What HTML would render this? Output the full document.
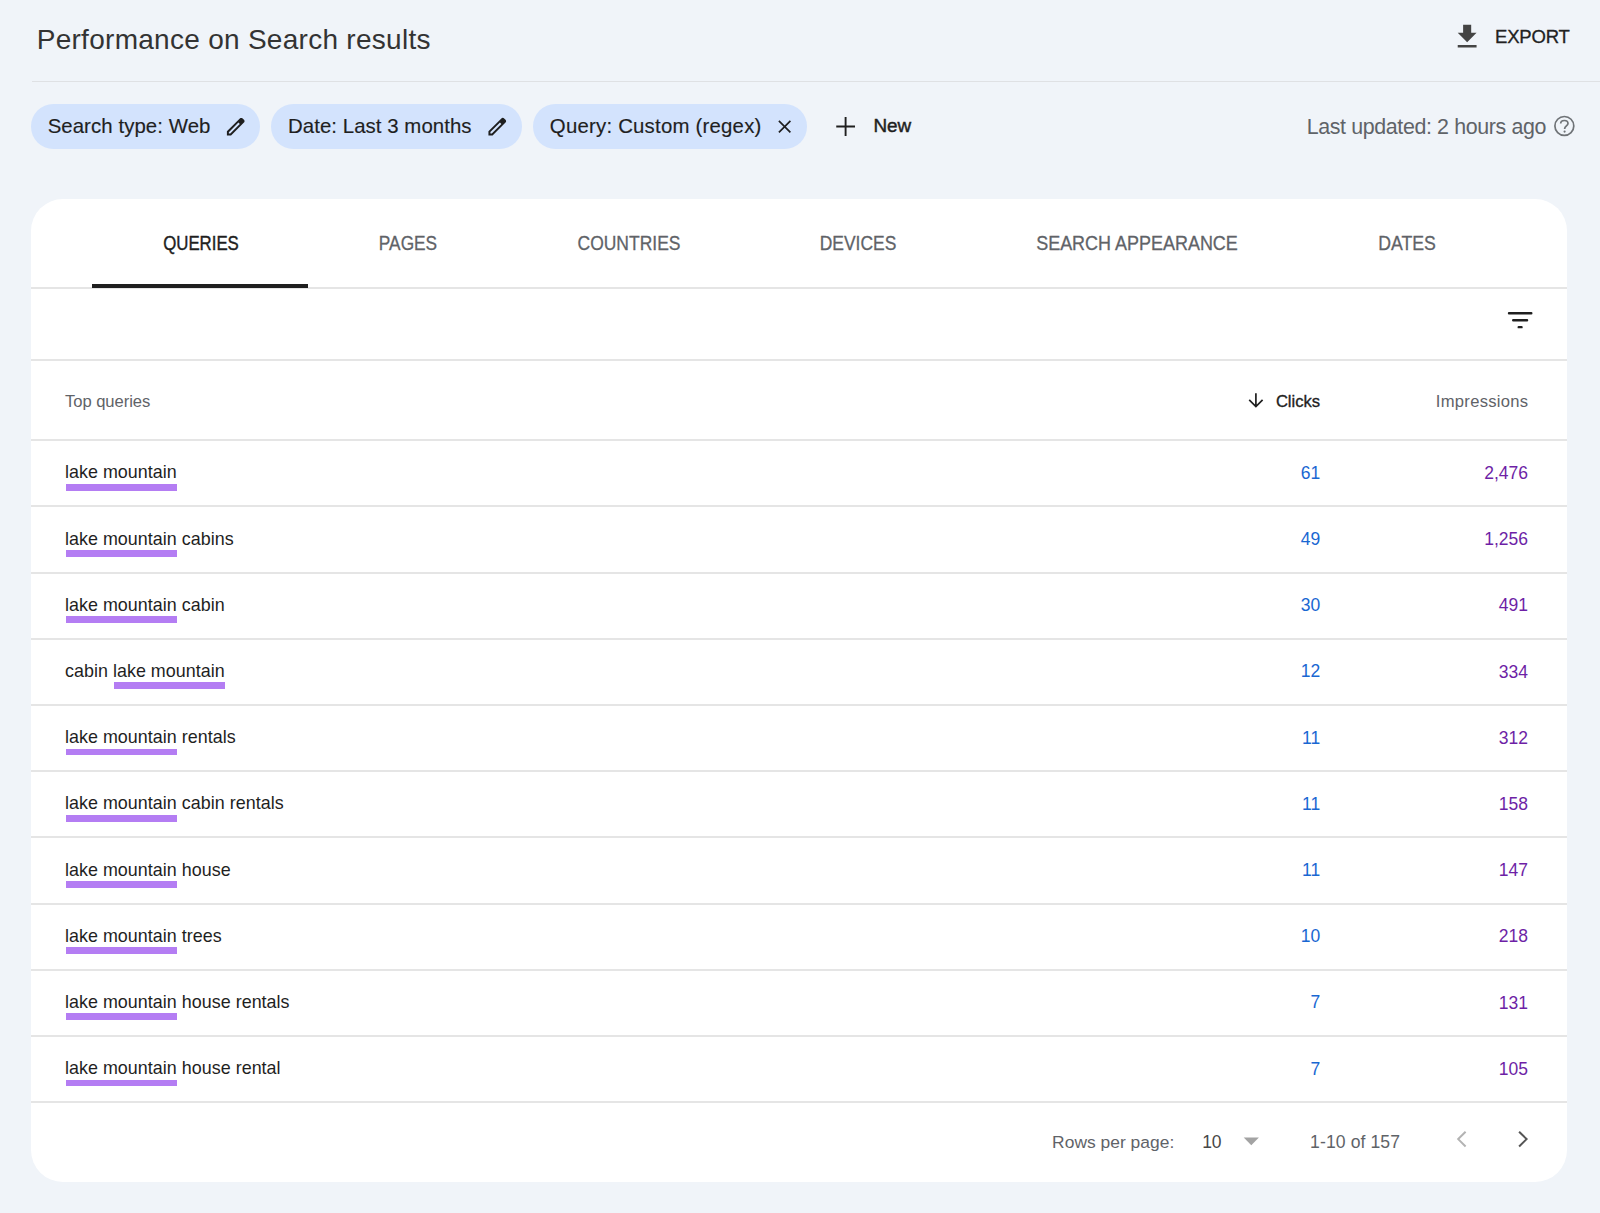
<!DOCTYPE html>
<html><head><meta charset="utf-8"><style>
html,body{margin:0;padding:0;}
body{width:1600px;height:1213px;background:#f0f4f9;position:relative;overflow:hidden;font-family:"Liberation Sans",sans-serif;}
.t{position:absolute;white-space:nowrap;}
.r{position:absolute;}
</style></head><body>
<div class="t" style="top:23.60px;font-size:28.0px;line-height:32.2px;color:#333333;letter-spacing:0.28px;left:36.71px;">Performance on Search results</div>
<div class="t" style="top:25.75px;font-size:18.5px;line-height:21.275px;color:#222222;letter-spacing:-0.184px;-webkit-text-stroke:0.3px #222222;left:1495.00px;">EXPORT</div>
<div class="r" style="left:32px;top:80.9px;width:1568px;height:1.6px;background:#dfe1e4;"></div>
<div class="r" style="left:31px;top:104.3px;width:229.2px;height:44.45px;background:#d3e3fd;border-radius:22.2px;"></div>
<div class="r" style="left:271.4px;top:104.3px;width:250.8px;height:44.45px;background:#d3e3fd;border-radius:22.2px;"></div>
<div class="r" style="left:533px;top:104.3px;width:273.9px;height:44.45px;background:#d3e3fd;border-radius:22.2px;"></div>
<div class="t" style="top:115.00px;font-size:20.4px;line-height:23.46px;color:#1f1f1f;letter-spacing:0.072px;-webkit-text-stroke:0.15px #1f1f1f;left:47.64px;">Search type: Web</div>
<div class="t" style="top:115.00px;font-size:20.4px;line-height:23.46px;color:#1f1f1f;letter-spacing:0.05px;-webkit-text-stroke:0.15px #1f1f1f;left:288.10px;">Date: Last 3 months</div>
<div class="t" style="top:115.00px;font-size:20.4px;line-height:23.46px;color:#1f1f1f;letter-spacing:0.209px;-webkit-text-stroke:0.15px #1f1f1f;left:549.82px;">Query: Custom (regex)</div>
<div class="t" style="top:115.08px;font-size:18.9px;line-height:21.735px;color:#1f1f1f;letter-spacing:-0.09px;-webkit-text-stroke:0.45px #1f1f1f;left:873.46px;">New</div>
<div class="t" style="top:114.98px;font-size:21.4px;line-height:24.61px;color:#5f6368;letter-spacing:-0.364px;left:1306.64px;">Last updated: 2 hours ago</div>
<div class="r" style="left:30.75px;top:198.7px;width:1536.5px;height:983.3px;background:#fff;border-radius:32px;"></div>
<div class="t" style="top:232.03px;font-size:19.5px;line-height:22.425px;color:#1f1f1f;-webkit-text-stroke:0.4px #1f1f1f;left:-99.22px;width:600px;text-align:center;transform:scaleX(0.8622);transform-origin:50% 50%;">QUERIES</div>
<div class="t" style="top:232.03px;font-size:19.5px;line-height:22.425px;color:#5f6368;-webkit-text-stroke:0.28px #5f6368;left:108.27px;width:600px;text-align:center;transform:scaleX(0.8860);transform-origin:50% 50%;">PAGES</div>
<div class="t" style="top:232.03px;font-size:19.5px;line-height:22.425px;color:#5f6368;-webkit-text-stroke:0.28px #5f6368;left:329.00px;width:600px;text-align:center;transform:scaleX(0.8964);transform-origin:50% 50%;">COUNTRIES</div>
<div class="t" style="top:232.03px;font-size:19.5px;line-height:22.425px;color:#5f6368;-webkit-text-stroke:0.28px #5f6368;left:558.00px;width:600px;text-align:center;transform:scaleX(0.8941);transform-origin:50% 50%;">DEVICES</div>
<div class="t" style="top:232.03px;font-size:19.5px;line-height:22.425px;color:#5f6368;-webkit-text-stroke:0.28px #5f6368;left:837.45px;width:600px;text-align:center;transform:scaleX(0.9211);transform-origin:50% 50%;">SEARCH APPEARANCE</div>
<div class="t" style="top:232.03px;font-size:19.5px;line-height:22.425px;color:#5f6368;-webkit-text-stroke:0.28px #5f6368;left:1107.45px;width:600px;text-align:center;transform:scaleX(0.9067);transform-origin:50% 50%;">DATES</div>
<div class="r" style="left:31px;top:287.05px;width:1536px;height:2px;background:#e5e5e5;"></div>
<div class="r" style="left:92px;top:284px;width:216.2px;height:3.9px;background:#1f1f1f;"></div>
<div class="r" style="left:31px;top:359.05px;width:1536px;height:2px;background:#e5e5e5;"></div>
<div class="t" style="top:391.50px;font-size:16.6px;line-height:19.09px;color:#5f6368;letter-spacing:-0.054px;left:65.00px;">Top queries</div>
<div class="t" style="top:391.70px;font-size:16.6px;line-height:19.09px;color:#1f1f1f;letter-spacing:-0.036px;-webkit-text-stroke:0.35px #1f1f1f;right:280.04px;">Clicks</div>
<div class="t" style="top:391.70px;font-size:16.6px;line-height:19.09px;color:#5f6368;letter-spacing:0.27px;right:71.73px;">Impressions</div>
<div class="r" style="left:31px;top:439.1px;width:1536px;height:2px;background:#e5e5e5;"></div>
<div class="t" style="top:462.41px;font-size:17.9px;line-height:20.585px;color:#1f1f1f;letter-spacing:0.03px;left:65.00px;">lake mountain</div>
<div class="r" style="left:65.9px;top:483.70px;width:111px;height:6.9px;background:#b47df3;"></div>
<div class="t" style="top:462.77px;font-size:17.5px;line-height:20.125px;color:#1967d2;right:279.75px;">61</div>
<div class="t" style="top:462.97px;font-size:17.5px;line-height:20.125px;color:#6e1fa6;right:72.00px;">2,476</div>
<div class="r" style="left:31px;top:505.31px;width:1536px;height:2px;background:#e5e5e5;"></div>
<div class="t" style="top:528.62px;font-size:17.9px;line-height:20.585px;color:#1f1f1f;letter-spacing:0.03px;left:65.00px;">lake mountain cabins</div>
<div class="r" style="left:65.9px;top:549.91px;width:111px;height:6.9px;background:#b47df3;"></div>
<div class="t" style="top:528.98px;font-size:17.5px;line-height:20.125px;color:#1967d2;right:279.75px;">49</div>
<div class="t" style="top:529.18px;font-size:17.5px;line-height:20.125px;color:#6e1fa6;right:72.00px;">1,256</div>
<div class="r" style="left:31px;top:571.52px;width:1536px;height:2px;background:#e5e5e5;"></div>
<div class="t" style="top:594.83px;font-size:17.9px;line-height:20.585px;color:#1f1f1f;letter-spacing:0.03px;left:65.00px;">lake mountain cabin</div>
<div class="r" style="left:65.9px;top:616.12px;width:111px;height:6.9px;background:#b47df3;"></div>
<div class="t" style="top:595.19px;font-size:17.5px;line-height:20.125px;color:#1967d2;right:279.75px;">30</div>
<div class="t" style="top:595.39px;font-size:17.5px;line-height:20.125px;color:#6e1fa6;right:72.00px;">491</div>
<div class="r" style="left:31px;top:637.73px;width:1536px;height:2px;background:#e5e5e5;"></div>
<div class="t" style="top:661.04px;font-size:17.9px;line-height:20.585px;color:#1f1f1f;letter-spacing:0.03px;left:65.00px;">cabin lake mountain</div>
<div class="r" style="left:113.75px;top:682.33px;width:111px;height:6.9px;background:#b47df3;"></div>
<div class="t" style="top:661.40px;font-size:17.5px;line-height:20.125px;color:#1967d2;right:279.75px;">12</div>
<div class="t" style="top:661.60px;font-size:17.5px;line-height:20.125px;color:#6e1fa6;right:72.00px;">334</div>
<div class="r" style="left:31px;top:703.94px;width:1536px;height:2px;background:#e5e5e5;"></div>
<div class="t" style="top:727.25px;font-size:17.9px;line-height:20.585px;color:#1f1f1f;letter-spacing:0.03px;left:65.00px;">lake mountain rentals</div>
<div class="r" style="left:65.9px;top:748.54px;width:111px;height:6.9px;background:#b47df3;"></div>
<div class="t" style="top:727.61px;font-size:17.5px;line-height:20.125px;color:#1967d2;right:279.75px;">11</div>
<div class="t" style="top:727.81px;font-size:17.5px;line-height:20.125px;color:#6e1fa6;right:72.00px;">312</div>
<div class="r" style="left:31px;top:770.15px;width:1536px;height:2px;background:#e5e5e5;"></div>
<div class="t" style="top:793.46px;font-size:17.9px;line-height:20.585px;color:#1f1f1f;letter-spacing:0.03px;left:65.00px;">lake mountain cabin rentals</div>
<div class="r" style="left:65.9px;top:814.75px;width:111px;height:6.9px;background:#b47df3;"></div>
<div class="t" style="top:793.82px;font-size:17.5px;line-height:20.125px;color:#1967d2;right:279.75px;">11</div>
<div class="t" style="top:794.02px;font-size:17.5px;line-height:20.125px;color:#6e1fa6;right:72.00px;">158</div>
<div class="r" style="left:31px;top:836.36px;width:1536px;height:2px;background:#e5e5e5;"></div>
<div class="t" style="top:859.67px;font-size:17.9px;line-height:20.585px;color:#1f1f1f;letter-spacing:0.03px;left:65.00px;">lake mountain house</div>
<div class="r" style="left:65.9px;top:880.96px;width:111px;height:6.9px;background:#b47df3;"></div>
<div class="t" style="top:860.03px;font-size:17.5px;line-height:20.125px;color:#1967d2;right:279.75px;">11</div>
<div class="t" style="top:860.23px;font-size:17.5px;line-height:20.125px;color:#6e1fa6;right:72.00px;">147</div>
<div class="r" style="left:31px;top:902.57px;width:1536px;height:2px;background:#e5e5e5;"></div>
<div class="t" style="top:925.88px;font-size:17.9px;line-height:20.585px;color:#1f1f1f;letter-spacing:0.03px;left:65.00px;">lake mountain trees</div>
<div class="r" style="left:65.9px;top:947.17px;width:111px;height:6.9px;background:#b47df3;"></div>
<div class="t" style="top:926.24px;font-size:17.5px;line-height:20.125px;color:#1967d2;right:279.75px;">10</div>
<div class="t" style="top:926.44px;font-size:17.5px;line-height:20.125px;color:#6e1fa6;right:72.00px;">218</div>
<div class="r" style="left:31px;top:968.78px;width:1536px;height:2px;background:#e5e5e5;"></div>
<div class="t" style="top:992.09px;font-size:17.9px;line-height:20.585px;color:#1f1f1f;letter-spacing:0.03px;left:65.00px;">lake mountain house rentals</div>
<div class="r" style="left:65.9px;top:1013.38px;width:111px;height:6.9px;background:#b47df3;"></div>
<div class="t" style="top:992.45px;font-size:17.5px;line-height:20.125px;color:#1967d2;right:279.75px;">7</div>
<div class="t" style="top:992.65px;font-size:17.5px;line-height:20.125px;color:#6e1fa6;right:72.00px;">131</div>
<div class="r" style="left:31px;top:1034.99px;width:1536px;height:2px;background:#e5e5e5;"></div>
<div class="t" style="top:1058.30px;font-size:17.9px;line-height:20.585px;color:#1f1f1f;letter-spacing:0.03px;left:65.00px;">lake mountain house rental</div>
<div class="r" style="left:65.9px;top:1079.59px;width:111px;height:6.9px;background:#b47df3;"></div>
<div class="t" style="top:1058.66px;font-size:17.5px;line-height:20.125px;color:#1967d2;right:279.75px;">7</div>
<div class="t" style="top:1058.86px;font-size:17.5px;line-height:20.125px;color:#6e1fa6;right:72.00px;">105</div>
<div class="r" style="left:31px;top:1101.20px;width:1536px;height:2px;background:#e5e5e5;"></div>
<div class="t" style="top:1132.17px;font-size:17.4px;line-height:20.01px;color:#5f6368;letter-spacing:0.027px;left:1052.10px;">Rows per page:</div>
<div class="t" style="top:1132.07px;font-size:17.5px;line-height:20.125px;color:#474747;letter-spacing:-0.36px;left:1202.28px;">10</div>
<div class="t" style="top:1131.98px;font-size:17.6px;line-height:20.24px;color:#5f6368;letter-spacing:0.09px;left:1310.10px;">1-10 of 157</div>
<svg style="position:absolute;left:0;top:0" width="1600" height="1213" viewBox="0 0 1600 1213"><path transform="translate(1451 20.7) scale(1.346)" fill="#444" d="M19 9h-4V3H9v6H5l7 7 7-7zM5 18v2h14v-2H5z"/><path transform="translate(223.96 138.45999999999998) scale(0.02448)" fill="#1f1f1f" d="M200-200h57l391-391-57-57-391 391v57Zm-80 80v-170l528-527q12-11 26.5-17t30.5-6q16 0 31 6t26 18l55 56q12 11 17.5 26t5.5 30q0 16-5.5 30.5T817-647L290-120H120Z"/><path transform="translate(485.5 138.4) scale(0.02448)" fill="#1f1f1f" d="M200-200h57l391-391-57-57-391 391v57Zm-80 80v-170l528-527q12-11 26.5-17t30.5-6q16 0 31 6t26 18l55 56q12 11 17.5 26t5.5 30q0 16-5.5 30.5T817-647L290-120H120Z"/><path stroke="#1f1f1f" stroke-width="1.7" d="M778.9 120.8L790.4 132.3M790.4 120.8L778.9 132.3"/><path stroke="#1f1f1f" stroke-width="1.9" d="M836.25 126.5H855M845.6 117V135.9"/><circle cx="1564.35" cy="125.95" r="9.45" fill="none" stroke="#6f7377" stroke-width="1.7"/><path fill="none" stroke="#6f7377" stroke-width="1.7" d="M1560.7 123.6C1560.7 121.5 1562.3 120.5 1564.4 120.5C1566.5 120.5 1568 121.7 1568 123.5C1568 125.7 1564.6 126.3 1564.6 128.9"/><circle cx="1564.6" cy="131.6" r="1.1" fill="#6f7377"/><path fill="none" stroke="#1f1f1f" stroke-width="2.4" stroke-linecap="round" d="M1509 313.25H1531.3M1513.2 320.25H1527.05M1518.7 327.15H1521.55"/><path fill="none" stroke="#1f1f1f" stroke-width="1.7" d="M1255.9 393.2V406.3M1249.2 399.9L1255.9 406.6L1262.6 399.9"/><path fill="#a3a3a3" d="M1243.7 1137.6h15.2l-7.6 7.6z"/><path fill="none" stroke="#b3b3b3" stroke-width="2" d="M1465.6 1131.7L1458.2 1139.1L1465.6 1146.5"/><path fill="none" stroke="#555555" stroke-width="2" d="M1519.1 1131.7L1526.6 1139.1L1519.1 1146.5"/></svg>
</body></html>
